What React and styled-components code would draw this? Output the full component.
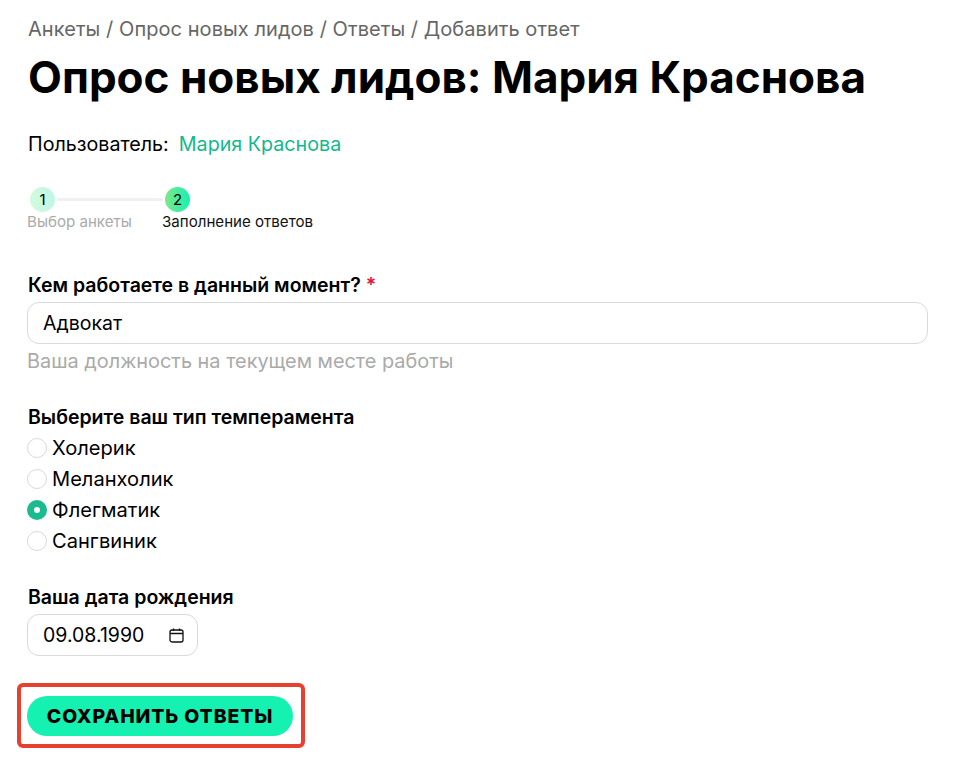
import React from 'react';
import styled, { createGlobalStyle } from 'styled-components';

const Global = createGlobalStyle`
  html, body { margin: 0; background: #fff; }
  body { font-family: "Inter", "Noto Sans", sans-serif; color: #000; }
`;
const Page = styled.div`
  width: 957px; height: 763px; box-sizing: border-box; padding: 16px 29px 0 27px; overflow: hidden;
`;
const Crumbs = styled.div`font-size: 20px; line-height: 26px; color: #666; padding-left: 1px; letter-spacing: .06px;`;
const Title = styled.h1`margin: 6px 0 0; padding-left: 1px; font-size: 44px; line-height: 58px; font-weight: 700; white-space: nowrap;`;
const UserRow = styled.div`margin-top: 26px; padding-left: 1px; display: flex; gap: 10px; font-size: 19.7px; line-height: 24px;`;
const UserLink = styled.span`color: #12b88e;`;
const Steps = styled.div`margin-top: 31px; width: 300px;`;
const Track = styled.div`display: flex; align-items: center; gap: 2px; padding-left: 3px;`;
const Line = styled.div`width: 106px; height: 3px; background: #f0f0f0;`;
const Dot = styled.div`
  width: 25px; height: 25px; border-radius: 50%; background: ${p => p.$bg};
  display: flex; align-items: center; justify-content: center; font-size: 15px;
`;
const StepLabels = styled.div`margin-top: 1px; display: flex;`;
const StepLabel = styled.div`
  width: ${p => p.$w}px; font-size: 15.1px; line-height: 18px; white-space: nowrap; color: ${p => p.$c};
`;
const Label = styled.div`font-size: 19.5px; line-height: 24px; font-weight: 600; padding-left: 1px;`;
const Req = styled.span`color: #e8123c;`;
const Field = styled.div`
  box-sizing: border-box; height: 42px; margin-top: 5px; border: 1px solid #d9d9d9; border-radius: 12px;
  padding: 0 12px 0 15px; display: flex; align-items: center; justify-content: space-between;
  font-size: 19.5px; width: ${p => p.$w};
`;
const Hint = styled.div`margin-top: 5px; font-size: 19.9px; line-height: 24px; color: #aaa;`;
const Section = styled.div`margin-top: ${p => p.$mt}px;`;
const Options = styled.div`margin-top: 3px; display: flex; flex-direction: column;`;
const Option = styled.div`height: 31px; display: flex; align-items: center; gap: 5px; font-size: 20.1px;`;
const Radio = styled.span`
  box-sizing: border-box; width: 20px; height: 20px; border-radius: 50%;
  border: ${p => p.$on ? '7px solid #1abc8f' : '1px solid #d9d9d9'}; background: #fff;
`;
const Highlight = styled.div`
  margin: 27px 0 0 -10px; width: 288px; height: 65px; box-sizing: border-box;
  border: 4px solid #e8402f; border-radius: 6px; display: flex; align-items: center; padding-left: 6px;
`;
const Button = styled.button`
  width: 266px; height: 40px; border: 0; border-radius: 20px; background: #14f1b1; color: #000; padding: 0;
  font: 800 19.4px "Inter", sans-serif; letter-spacing: .9px; white-space: nowrap;
`;
const Cal = () => (
  <svg width="17" height="17" viewBox="0 0 17 17" fill="none" stroke="#111" strokeWidth="1.3">
    <rect x="2" y="3" width="13" height="12" rx="2" /><path d="M2 6.5h13M5.5 1.5v2.5M11.5 1.5v2.5" />
  </svg>
);
export default function App() {
  return (
    <Page>
      <Global />
      <Crumbs>Анкеты / Опрос новых лидов / Ответы / Добавить ответ</Crumbs>
      <Title>Опрос новых лидов: Мария Краснова</Title>
      <UserRow><span>Пользователь:</span><UserLink>Мария Краснова</UserLink></UserRow>
      <Steps>
        <Track>
          <Dot $bg="linear-gradient(90deg,#d2fbdc,#bff6e8)">1</Dot>
          <Line />
          <Dot $bg="linear-gradient(90deg,#7fe88a,#14f1b1)">2</Dot>
        </Track>
        <StepLabels>
          <StepLabel $w={135} $c="#aaa">Выбор анкеты</StepLabel>
          <StepLabel $c="#111">Заполнение ответов</StepLabel>
        </StepLabels>
      </Steps>
      <Section $mt={42}>
        <Label>Кем работаете в данный момент? <Req>*</Req></Label>
        <Field>Адвокат</Field>
        <Hint>Ваша должность на текущем месте работы</Hint>
      </Section>
      <Section $mt={32}>
        <Label>Выберите ваш тип темперамента</Label>
        <Options>
          <Option><Radio />Холерик</Option>
          <Option><Radio />Меланхолик</Option>
          <Option><Radio $on />Флегматик</Option>
          <Option><Radio />Сангвиник</Option>
        </Options>
      </Section>
      <Section $mt={29}>
        <Label>Ваша дата рождения</Label>
        <Field $w="171px">09.08.1990<Cal /></Field>
      </Section>
      <Highlight><Button>СОХРАНИТЬ ОТВЕТЫ</Button></Highlight>
    </Page>
  );
}
